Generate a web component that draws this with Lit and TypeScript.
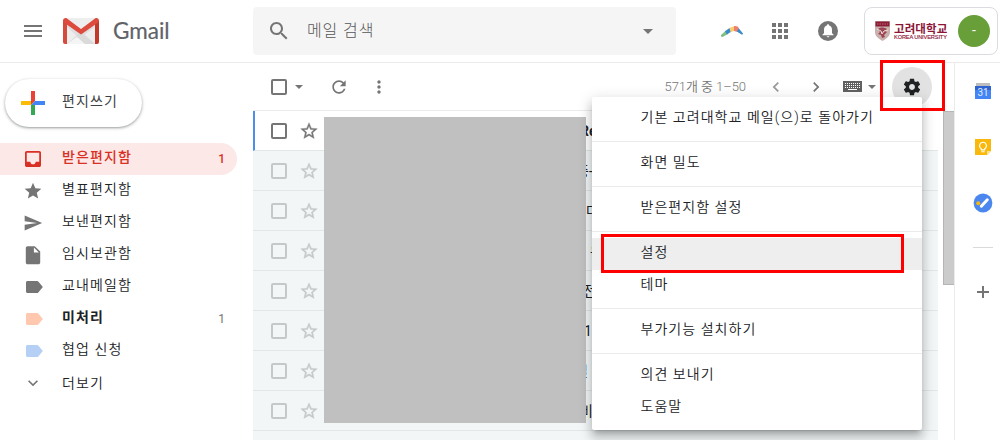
import { LitElement, html, css, svg } from "lit";
import { customElement } from "lit/decorators.js";
import { classMap } from "lit/directives/class-map.js";

const glyphs: Record<string, unknown> = {
  inbox: svg`<path d="M19 3H4.99c-1.11 0-1.98.89-1.98 2L3 19c0 1.1.88 2 1.99 2H19c1.1 0 2-.9 2-2V5c0-1.11-.9-2-2-2zm0 12h-4c0 1.66-1.35 3-3 3s-3-1.34-3-3H4.99V5H19v10z"/>`,
  star: svg`<path d="M12 17.27L18.18 21l-1.64-7.03L22 9.24l-7.19-.61L12 2 9.19 8.63 2 9.24l5.46 4.73L5.82 21z"/>`,
  send: svg`<path d="M2.01 21L23 12 2.01 3 2 10l15 2-15 2z"/>`,
  draft: svg`<path d="M6 2c-1.1 0-1.99.9-1.99 2L4 20c0 1.100.890 2 1.990 2H18c1.100 0 2-.9 2-2V8l-6-6H6zm7 7V3.500L18.500 9H13z"/>`,
  label: svg`<path d="M18.600 5.800C18.100 5.100 17.500 4.800 16.800 4.800H5.400C4.400 4.800 3.600 5.600 3.600 6.600v10.800c0 1 .8 1.800 1.800 1.800h11.400c.7 0 1.300-.3 1.800-1L23.800 12z"/>`,
  more: svg`<path d="M7.410 8.590L12 13.170l4.590-4.580L18 10l-6 6-6-6z"/>`,
  starOutline: svg`<path d="M22 9.240l-7.190-.620L12 2 9.190 8.630 2 9.240l5.460 4.730L5.820 21 12 17.270 18.180 21l-1.630-7.030L22 9.240zM12 15.400l-3.760 2.270 1-4.280-3.320-2.880 4.380-.380L12 6.100l1.710 4.040 4.380.380-3.320 2.880 1 4.280L12 15.400z"/>`,
  search: svg`<path d="M15.500 14h-.790l-.280-.270C15.410 12.590 16 11.110 16 9.500 16 5.910 13.090 3 9.500 3S3 5.910 3 9.500 5.910 16 9.500 16c1.610 0 3.090-.590 4.230-1.570l.270.280v.790l5 4.990L20.490 19l-4.990-5zm-6 0C7.010 14 5 11.990 5 9.500S7.010 5 9.500 5 14 7.010 14 9.500 11.990 14 9.500 14z"/>`,
  refresh: svg`<path d="M17.650 6.350C16.200 4.900 14.210 4 12 4c-4.420 0-7.990 3.580-7.990 8s3.570 8 7.990 8c3.730 0 6.840-2.550 7.730-6h-2.080c-.820 2.330-3.040 4-5.650 4-3.310 0-6-2.690-6-6s2.690-6 6-6c1.660 0 3.140.690 4.220 1.780L13 11h7V4l-2.350 2.350z"/>`,
  dots: svg`<path d="M12 8c1.100 0 2-.9 2-2s-.9-2-2-2-2 .9-2 2 .9 2 2 2zm0 2c-1.100 0-2 .9-2 2s.9 2 2 2 2-.9 2-2-.9-2-2-2zm0 6c-1.100 0-2 .9-2 2s.9 2 2 2 2-.9 2-2-.9-2-2-2z"/>`,
  prev: svg`<path d="M15.410 7.410L14 6l-6 6 6 6 1.410-1.410L10.830 12z"/>`,
  next: svg`<path d="M10 6L8.590 7.410 13.170 12l-4.580 4.590L10 18l6-6z"/>`,
  gear: svg`<path d="M19.430 12.980c.040-.320.070-.640.070-.980s-.030-.660-.070-.980l2.110-1.650c.190-.150.240-.420.120-.640l-2-3.460c-.120-.220-.390-.300-.610-.220l-2.490 1c-.520-.400-1.080-.730-1.690-.980l-.380-2.650C14.460 2.180 14.250 2 14 2h-4c-.250 0-.460.180-.490.420l-.380 2.650c-.610.250-1.170.590-1.690.980l-2.490-1c-.230-.090-.490 0-.610.220l-2 3.460c-.130.220-.070.490.120.640l2.110 1.650c-.040.320-.070.650-.070.980s.030.660.070.980l-2.110 1.650c-.190.150-.240.420-.120.640l2 3.460c.120.220.390.300.610.220l2.490-1c.520.400 1.080.730 1.690.980l.380 2.650c.030.240.240.420.490.420h4c.250 0 .460-.180.490-.420l.380-2.650c.610-.250 1.170-.590 1.690-.980l2.490 1c.230.090.490 0 .610-.220l2-3.460c.120-.220.070-.490-.120-.640l-2.110-1.650zM12 15.500c-1.930 0-3.500-1.570-3.500-3.500s1.570-3.500 3.500-3.500 3.500 1.570 3.500 3.500-1.570 3.500-3.500 3.500z"/>`,
};

const boxes: Record<string, string> = {
  inbox: "0.75 0.75 22.5 22.5",
  draft: "0.9 0.7 22.2 22.2",
};

const icon = (name: string, size = 20) =>
  html`<svg class="icon" width=${size} height=${size} viewBox=${boxes[name] ?? "0 0 24 24"}>${glyphs[name]}</svg>`;

const caret = (w = 8, h = 4) =>
  html`<svg class="icon" width=${w} height=${h} viewBox="0 0 10 5" preserveAspectRatio="none"><path d="M0 0h10L5 5z"/></svg>`;

const folders = [
  { icon: "inbox", text: "받은편지함", count: "1", kind: "active" },
  { icon: "star", text: "별표편지함" },
  { icon: "send", text: "보낸편지함" },
  { icon: "draft", text: "임시보관함" },
  { icon: "label", text: "교내메일함" },
  { icon: "label", text: "미처리", count: "1", kind: "peach" },
  { icon: "label", text: "협업 신청", kind: "blue" },
  { icon: "more", text: "더보기", kind: "last" },
];

const mails = [
  { text: "Re", indent: 261, unread: true },
  { text: "중-", indent: 257 },
  { text: "다", indent: 267 },
  { text: "우", indent: 271 },
  { text: "전", indent: 264 },
  { text: "1", indent: 265 },
  { text: "일", indent: 256 },
  { text: "비", indent: 261 },
  { text: "", indent: 0 },
];

const menuGroups = [
  ["기본 고려대학교 메일(으)로 돌아가기"],
  ["화면 밀도"],
  ["받은편지함 설정"],
  ["설정", "테마"],
  ["부가기능 설치하기"],
  ["의견 보내기", "도움말"],
];

@customElement("app-root")
export class AppRoot extends LitElement {
  static styles = css`
    :host {
      display: block;
      position: relative;
      width: 1000px;
      height: 440px;
      overflow: hidden;
      background: #fff;
      color: #202124;
      font: 14px/20px Roboto, "Noto Sans CJK KR", sans-serif;
    }
    * { box-sizing: border-box; }
    svg { display: block; flex: none; }
    .icon { fill: currentColor; }
    .header {
      display: flex;
      align-items: center;
      height: 63px;
      border-bottom: 1px solid #ebebeb;
      color: #757575;
    }
    .brand { display: flex; align-items: center; width: 253px; padding-left: 24px; }
    .burger { display: grid; gap: 3px; width: 18px; margin-right: 21px; }
    .burger i { height: 2px; background: #757575; }
    .wordmark {
      margin-left: 14px;
      font: 400 22.5px/26px Lato, sans-serif;
      letter-spacing: 0;
      color: #5f6368;
      -webkit-text-stroke: 0.2px #5f6368;
    }
    .search {
      display: flex;
      align-items: center;
      width: 423px;
      height: 48px;
      padding: 0 23px 0 14px;
      border-radius: 4px;
      background: #f5f5f5;
    }
    .search span { flex: 1; margin-left: 16px; font-size: 16px; font-weight: 300; letter-spacing: 0.9px; color: #555; }
    .boomerang { margin-left: 45px; }
    .apps { display: grid; grid-template-columns: repeat(3, 4px); gap: 2px; margin-left: 29px; }
    .apps i { height: 4px; background: #757575; }
    .bell { margin-left: 30px; }
    .account {
      display: flex;
      align-items: center;
      width: 134px;
      height: 48px;
      margin-left: 26px;
      padding: 0 7px 0 10px;
      border: 1px solid #dadce0;
      border-radius: 8px;
      color: #8c1537;
    }
    .univ { flex: 1; margin-left: 4px; white-space: nowrap; }
    .univ b { display: block; font: 700 11.5px/11px "Noto Sans CJK KR", sans-serif; letter-spacing: 0.1px; }
    .univ small { display: block; font: 400 5.6px/6px "Liberation Sans", sans-serif; letter-spacing: -0.1px; -webkit-text-stroke: 0.15px #8c1537; }
    .avatar {
      width: 32px;
      height: 32px;
      border-radius: 50%;
      background: #689f38;
      color: #fff;
      text-align: center;
      line-height: 30px;
    }
    .body { display: flex; height: 377px; }
    .nav { width: 253px; padding: 16px 16px 0 0; }
    .compose {
      display: flex;
      align-items: center;
      width: 137px;
      height: 48px;
      margin: 0 0 16px 5px;
      padding-left: 16px;
      border-radius: 24px;
      box-shadow: 0 1px 2px rgba(60, 64, 67, 0.35), 0 1px 3px 1px rgba(60, 64, 67, 0.15);
      color: #3c4043;
      letter-spacing: 1.1px;
    }
    .compose span { margin: -4px 0 0 17px; }
    .folder {
      display: flex;
      align-items: center;
      height: 32px;
      padding: 0 12px 0 23px;
      border-radius: 0 16px 16px 0;
      color: #757575;
    }
    .folder .name { flex: 1; margin: -4px 0 0 19px; font-weight: 350; letter-spacing: 1.1px; color: #202124; }
    .folder .count { font-size: 12px; }
    .folder.active { background: #fce8e6; color: #d93025; }
    .folder.active .name { color: #d93025; font-weight: 500; }
    .folder.active .count { font-weight: 500; }
    .folder.peach { color: #ffc8af; }
    .folder.peach .name { font-weight: 700; }
    .folder.peach .count { color: #757575; }
    .folder.blue { color: #b6cff5; }
    .folder.last .name { margin-top: 0; }
    .main { display: flex; flex-direction: column; width: 685px; color: #757575; }
    .toolbar { display: flex; align-items: center; height: 48px; flex: none; border-bottom: 1px solid #ebebeb; padding-left: 18px; }
    .box { width: 16px; height: 16px; border: 2px solid currentColor; border-radius: 2px; flex: none; }
    .toolbar .box + .icon { margin-left: 8px; }
    .refresh { margin-left: 26px; }
    .kebab { margin: 0 auto 0 20px; }
    .range { font-size: 13px; font-weight: 350; letter-spacing: -0.05px; white-space: nowrap; }
    .pager { display: flex; gap: 20px; margin-left: 20px; }
    .pager span:first-child { opacity: 0.75; }
    .keys { margin: 0 6px 0 17px; }
    .settings {
      display: grid;
      place-items: center;
      width: 40px;
      height: 40px;
      margin: 0 6px 0 16px;
      border-radius: 50%;
      background: #e2e2e2;
      color: #202124;
    }
    .mail {
      display: flex;
      align-items: center;
      height: 40px;
      flex: none;
      padding-left: 18px;
      border-bottom: 1px solid #e1e6e7;
      background: #f2f6f7;
      overflow: hidden;
      color: #c5c8c9;
    }
    .mail .icon { margin-left: 12px; stroke: currentColor; stroke-width: 0.4; }
    .mail .subject { color: #202124; white-space: nowrap; }
    .mail.unread { background: #fff; color: #757575; padding-left: 16px; border-left: 2px solid #4d8fe8; }
    .mail.unread .subject { font-weight: 700; }
    .scroll { width: 16px; padding: 48px 0 0 5px; }
    .thumb { height: 174px; background: #cbcbcb; border: 1px solid #b5b5b5; border-right: 0; }
    .panel {
      display: flex;
      flex-direction: column;
      align-items: center;
      flex: 1;
      padding: 19px 0 0 11px;
      margin-right: 1px;
      border-left: 1px solid #ebebeb;
    }
    .panel .keep { margin-top: 39px; }
    .panel .tasks { margin-top: 38px; }
    .panel hr { width: 20px; height: 1px; margin: 34px 0 38px; border: 0; background: #dadada; }
    .redaction { position: absolute; left: 324px; top: 117px; width: 262px; height: 306px; background: #c0c0c0; }
    .menu {
      position: absolute;
      left: 592px;
      top: 97px;
      width: 330px;
      padding: 6px 0;
      border-radius: 2px;
      background: #fff;
      box-shadow: 0 8px 10px 1px rgba(0, 0, 0, 0.14), 0 3px 14px 2px rgba(0, 0, 0, 0.12), 0 5px 5px -3px rgba(0, 0, 0, 0.2);
    }
    .group + .group { margin-top: 6px; padding-top: 6px; border-top: 1px solid #ebebeb; }
    .entry { height: 32px; padding: 4px 0 0 48.5px; font-weight: 350; letter-spacing: 1.05px; }
    .entry.hover { background: #eee; }
    .mark { position: absolute; border: 3px solid #f00; }
    .mark.gear { left: 880px; top: 60px; width: 65px; height: 51px; }
    .mark.option { left: 601px; top: 234px; width: 303px; height: 39px; }
  `;

  private header() {
    return html`<div class="header">
      <div class="brand">
        <div class="burger"><i></i><i></i><i></i></div>
        <svg width="36" height="26" viewBox="0 0 36 26">
          <path d="M2 0h32v26H2z" fill="#eee"/>
          <path d="M4 26L18 13l14 13z" fill="#e0e0e0"/>
          <path d="M4 26l10-7 8 7z" fill="#f5f5f5"/>
          <path d="M4 5l14 11L32 5v4L21 17l11 9H22L4 9z" fill="#d5d5d5" opacity=".6"/>
          <path d="M0 2.500L4 4v22H2a2 2 0 0 1-2-2z" fill="#d54b3d"/>
          <path d="M36 2.500L32 4v22h2a2 2 0 0 0 2-2z" fill="#c0392b"/>
          <path d="M0 2.500C0 .5 2.500-.6 4 .6L18 11 32 .6c1.500-1.200 4-.1 4 1.900 0 1-.5 1.700-1.200 2.200L18 16.500 1.200 4.700C.5 4.200 0 3.500 0 2.500z" fill="#dd4b3e"/>
        </svg>
        <span class="wordmark">Gmail</span>
      </div>
      <div class="search">${icon("search", 24)}<span>메일 검색</span>${caret(10, 5)}</div>
      <svg class="boomerang" width="22" height="11" viewBox="0 0 22 11">
        <path d="M0 9l5-4.500 2 3.500-5.500 3C.5 11.300-.3 10 0 9z" fill="#7fbf86"/>
        <path d="M4 5.300L8.500 2l2 3.500L6 8.500z" fill="#3b8bc8"/>
        <path d="M8.500 2L13 .3v4.600l-3.500 1.200z" fill="#f9cc6c"/>
        <path d="M13 .3c2-.6 4 .2 5 2.200L16.300 6 13 4.900z" fill="#ec7f70"/>
        <path d="M17.700 2.300L22 7.500c0 1-1 1.300-1.800.8L15.800 5.500z" fill="#3b8bc8"/>
      </svg>
      <div class="apps">${Array.from({ length: 9 }, () => html`<i></i>`)}</div>
      <svg class="bell" width="20" height="20" viewBox="0 0 20 20">
        <circle cx="10" cy="10" r="10" fill="#757575"/>
        <path d="M10 3.300c-.7 0-1.100.5-1.100 1.100C7 5 6 6.500 6 8.500v3.700L4.500 13.600v.6h11v-.6L14 12.200V8.500c0-2-1-3.500-2.900-4.100 0-.6-.4-1.100-1.100-1.100zM8.700 15.200h2.600c0 1.600-2.600 1.600-2.600 0z" fill="#fff"/>
      </svg>
      <div class="account">
        <svg width="15" height="20" viewBox="0 0 15 20">
          <path d="M0 0h15v11c0 4-3 6.500-7.500 9C3 17.500 0 15 0 11z" fill="#c9b1ad"/>
          <path d="M.5.500h14v5H.5z" fill="#8c1c35"/>
          <path d="M2 3h11" stroke="#b56a7a" stroke-dasharray="1.500 1"/>
          <path d="M3 8c2-2 6-2 9 0l-2 2 2 1-3 3 1 2-3 1-1-3-3-1 2-2z" fill="#9c4454"/>
          <path d="M2 8l4 2 1 3 2-3 4-1" fill="none" stroke="#eedfd9"/>
        </svg>
        <div class="univ"><b>고려대학교</b><small>KOREA UNIVERSITY</small></div>
        <div class="avatar">-</div>
      </div>
    </div>`;
  }

  private nav() {
    return html`<div class="nav">
      <div class="compose">
        <svg width="24" height="24" viewBox="0 0 24 24">
          <path d="M10 0h4v10l-4 4z" fill="#ea4335"/>
          <path d="M0 10h10v4H0z" fill="#fbbc04"/>
          <path d="M10 14h4v10h-4z" fill="#34a853"/>
          <path d="M14 10h10v4H10z" fill="#4285f4"/>
        </svg>
        <span>편지쓰기</span>
      </div>
      ${folders.map(
        (f) => html`<div class="folder ${f.kind ?? ""}">
          ${icon(f.icon)}<span class="name">${f.text}</span>
          ${f.count ? html`<span class="count">${f.count}</span>` : ""}
        </div>`
      )}
    </div>`;
  }

  private main() {
    return html`<div class="main">
      <div class="toolbar">
        <div class="box"></div>${caret()}
        <span class="refresh">${icon("refresh")}</span>
        <span class="kebab">${icon("dots")}</span>
        <span class="range">571개 중 1–50</span>
        <div class="pager"><span>${icon("prev")}</span><span>${icon("next")}</span></div>
        <svg class="keys" width="19" height="11" viewBox="0 0 19 11">
          <path d="M0 0h19v11H0z" fill="#616161"/>
          <path d="M2 2.500h15M2 4.500h15M2 6.500h15" stroke="#fff" stroke-dasharray="1 1"/>
          <path d="M5 8.500h9" stroke="#fff"/>
        </svg>
        ${caret()}
        <div class="settings">${icon("gear")}</div>
      </div>
      ${mails.map(
        (m) => html`<div class=${classMap({ mail: true, unread: !!m.unread })}>
          <div class="box"></div>${icon("starOutline")}
          <span class="subject" style="margin-left:${m.indent}px">${m.text}</span>
        </div>`
      )}
    </div>`;
  }

  private panel() {
    return html`<div class="panel">
      <svg width="16" height="18" viewBox="0 0 16 18">
        <path d="M1 1h14v4H1z" fill="#bdbdbd"/>
        <path d="M0 4h16v5H0z" fill="#2f63cf"/>
        <path d="M0 8h16v8.500a.5.500 0 0 1-.5.500H.5a.5.500 0 0 1-.5-.5z" fill="#4285f4"/>
        <text x="8" y="13.600" text-anchor="middle" font-size="10" fill="#e3edfd">31</text>
      </svg>
      <svg class="keep" width="16" height="16" viewBox="0 0 16 16">
        <path d="M0 0h16v12l-4 4H0z" fill="#f8b90c"/>
        <path d="M12 16v-4h4z" fill="#fde293"/>
        <path d="M6.300 9.700C3.300 8 4.500 3.300 8 3.300s4.700 4.700 1.700 6.400v1.200H6.300zM6.300 12.700h3.400" fill="none" stroke="#fff" stroke-width="1.100"/>
      </svg>
      <svg class="tasks" width="20" height="20" viewBox="0 0 20 20">
        <circle cx="10" cy="10" r="9.400" fill="#4b87ee"/>
        <path d="M8.300 13.200l6-6.400" stroke="#fff" stroke-width="3" stroke-linecap="round"/>
        <circle cx="5.200" cy="10.300" r="2" fill="#f8b90c"/>
      </svg>
      <hr>
      <svg width="12" height="12" viewBox="0 0 12 12"><path d="M5 0h2v5h5v2H7v5H5V7H0V5h5z" fill="#757575"/></svg>
    </div>`;
  }

  render() {
    return html`${this.header()}
      <div class="body">
        ${this.nav()} ${this.main()}
        <div class="scroll"><div class="thumb"></div></div>
        ${this.panel()}
      </div>
      <div class="redaction"></div>
      <div class="menu">
        ${menuGroups.map(
          (g) => html`<div class="group">
            ${g.map((t) => html`<div class=${classMap({ entry: true, hover: t === "설정" })}>${t}</div>`)}
          </div>`
        )}
      </div>
      <div class="mark gear"></div>
      <div class="mark option"></div>`;
  }
}
